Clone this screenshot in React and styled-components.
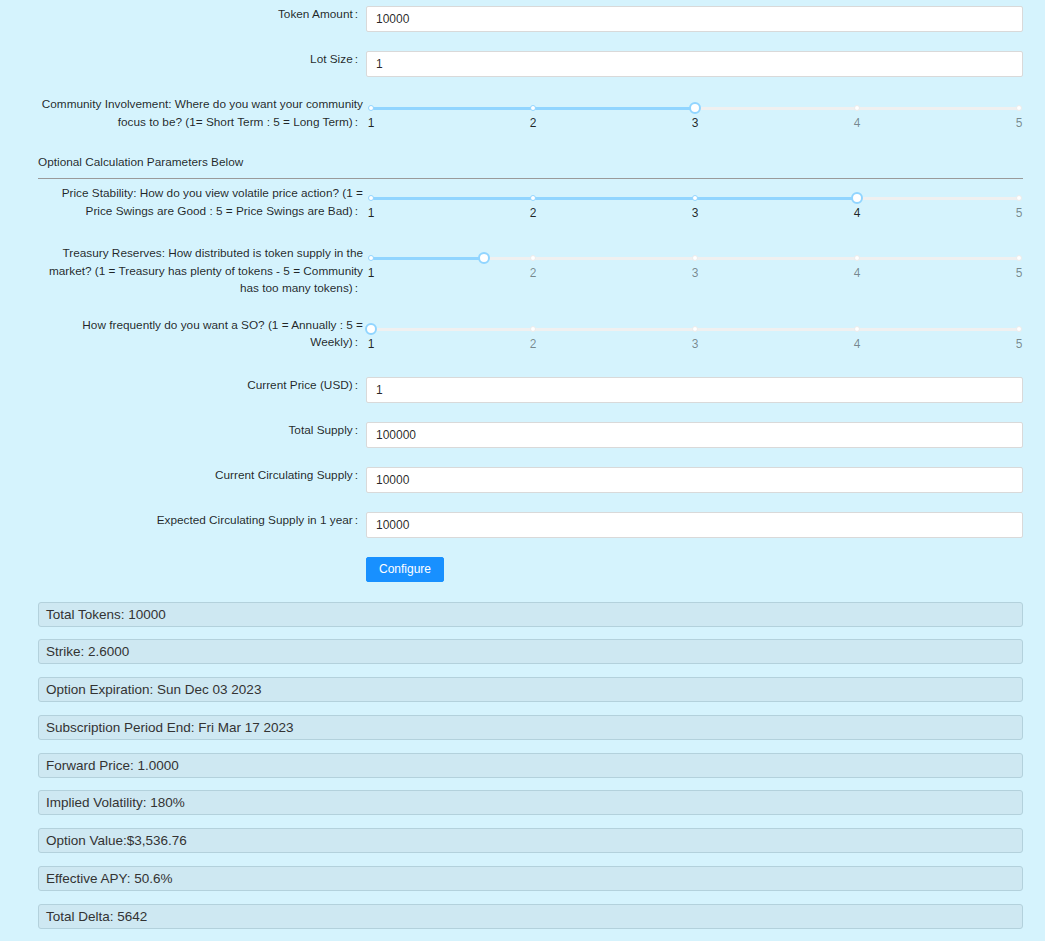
import React from "react";
import styled, { createGlobalStyle } from "styled-components";

const GlobalStyle = createGlobalStyle`
  html, body {
    margin: 0;
    padding: 0;
    background: #d5f3fd;
    font-family: "Liberation Sans", Arial, sans-serif;
    color: rgba(0, 0, 0, 0.85);
  }
  * { box-sizing: border-box; }
`;

const Page = styled.div`
  padding: 6px 22px 0 38px;
  min-height: 941px;
`;

const Form = styled.form`
  display: flex;
  flex-direction: column;
`;

const FormItem = styled.div`
  display: grid;
  grid-template-columns: 328px 1fr;
  align-items: start;
  margin-bottom: 19px;
`;

const Label = styled.label`
  display: block;
  text-align: right;
  font-size: 11.8px;
  line-height: 17.5px;
  padding: 0 3px 0 0;
  white-space: nowrap;
  color: rgba(0, 0, 0, 0.85);
`;

const Colon = styled.span`
  margin: 0 5px 0 2px;
`;

const Input = styled.input`
  display: block;
  width: 100%;
  height: 26px;
  padding: 0 9px;
  border: 1px solid #d9d9d9;
  border-radius: 2px;
  background: #fff;
  font-family: inherit;
  font-size: 12px;
  color: rgba(0, 0, 0, 0.85);
  outline: none;
`;

const SliderBox = styled.div`
  position: relative;
  height: 41px;
  margin: 0 4px 0 5px;
`;

const Rail = styled.div`
  position: absolute;
  left: 0;
  right: 0;
  top: ${(p) => p.$center - 1.5}px;
  height: 3.5px;
  border-radius: 2px;
  background: #f0f0f0;
`;

const Track = styled.div`
  position: absolute;
  left: 0;
  top: ${(p) => p.$center - 1.5}px;
  height: 3.5px;
  border-radius: 2px;
  background: #91d5ff;
`;

const Dot = styled.span`
  position: absolute;
  top: ${(p) => p.$center}px;
  width: 6px;
  height: 6px;
  border-radius: 50%;
  background: #fff;
  border: 1px solid ${(p) => (p.$active ? "#91d5ff" : "#ececec")};
  transform: translate(-50%, -50%);
`;

const Handle = styled.span`
  position: absolute;
  top: ${(p) => p.$center}px;
  width: 12px;
  height: 12px;
  border-radius: 50%;
  background: #fff;
  border: 2px solid #91d5ff;
  transform: translate(-50%, -50%);
`;

const Mark = styled.span`
  position: absolute;
  top: ${(p) => p.$center + 8}px;
  font-size: 12px;
  line-height: 14px;
  transform: translateX(-50%);
  color: ${(p) => (p.$active ? "rgba(0,0,0,0.85)" : "rgba(0,0,0,0.45)")};
`;

const Note = styled.div`
  font-size: 11.8px;
  line-height: 12px;
  color: rgba(0, 0, 0, 0.85);
`;

const Divider = styled.hr`
  margin: 10px 0 6px;
  border: none;
  border-top: 1px solid #9a9a9a;
  height: 0;
`;

const ButtonRow = styled.div`
  display: grid;
  grid-template-columns: 328px 1fr;
  margin-bottom: 20px;
`;

const Button = styled.button`
  justify-self: start;
  grid-column: 2;
  height: 25px;
  padding: 0 12px;
  border: 1px solid #1890ff;
  border-radius: 2px;
  background: #1890ff;
  color: #fff;
  font-family: inherit;
  font-size: 12px;
  cursor: pointer;
`;

const Results = styled.div`
  display: flex;
  flex-direction: column;
  gap: 12.75px;
`;

const ResultBox = styled.div`
  height: 25px;
  display: flex;
  align-items: center;
  padding: 0 7px;
  background: #cee8f2;
  border: 1px solid #b3d1dc;
  border-radius: 3px;
  font-size: 13.5px;
  color: #333;
`;

const Slider = ({ value, center = 12.5 }) => {
  const pct = ((value - 1) / 4) * 100;
  const marks = [1, 2, 3, 4, 5];
  return (
    <SliderBox>
      <Rail $center={center} />
      <Track $center={center} style={{ width: `${pct}%` }} />
      {marks.map((m) => (
        <Dot
          key={m}
          $center={center}
          $active={m <= value}
          style={{ left: `${((m - 1) / 4) * 100}%` }}
        />
      ))}
      <Handle $center={center} style={{ left: `${pct}%` }} />
      {marks.map((m) => (
        <Mark
          key={m}
          $center={center}
          $active={m <= value}
          style={{ left: `${((m - 1) / 4) * 100}%` }}
        >
          {m}
        </Mark>
      ))}
    </SliderBox>
  );
};

const FieldLabel = ({ lines }) => (
  <Label>
    {lines.map((l, i) => (
      <React.Fragment key={i}>
        {i > 0 && <br />}
        {l}
      </React.Fragment>
    ))}
    <Colon>:</Colon>
  </Label>
);

const InputField = ({ label, value }) => (
  <FormItem>
    <FieldLabel lines={[label]} />
    <Input defaultValue={value} />
  </FormItem>
);

const SliderField = ({ lines, value, center }) => (
  <FormItem>
    <FieldLabel lines={lines} />
    <Slider value={value} center={center} />
  </FormItem>
);

const results = [
  "Total Tokens: 10000",
  "Strike: 2.6000",
  "Option Expiration: Sun Dec 03 2023",
  "Subscription Period End: Fri Mar 17 2023",
  "Forward Price: 1.0000",
  "Implied Volatility: 180%",
  "Option Value:$3,536.76",
  "Effective APY: 50.6%",
  "Total Delta: 5642",
];

export default function App() {
  return (
    <>
      <GlobalStyle />
      <Page>
        <Form onSubmit={(e) => e.preventDefault()}>
          <InputField label="Token Amount" value="10000" />
          <InputField label="Lot Size" value="1" />
          <SliderField
            lines={[
              "Community Involvement: Where do you want your community",
              "focus to be? (1= Short Term : 5 = Long Term)",
            ]}
            value={3}
            center={12}
          />
          <Note>Optional Calculation Parameters Below</Note>
          <Divider />
          <SliderField
            lines={[
              "Price Stability: How do you view volatile price action? (1 =",
              "Price Swings are Good : 5 = Price Swings are Bad)",
            ]}
            value={4}
            center={13}
          />
          <SliderField
            lines={[
              "Treasury Reserves: How distributed is token supply in the",
              "market? (1 = Treasury has plenty of tokens - 5 = Community",
              "has too many tokens)",
            ]}
            value={1.7}
            center={13}
          />
          <SliderField
            lines={[
              "How frequently do you want a SO? (1 = Annually : 5 =",
              "Weekly)",
            ]}
            value={1}
            center={12.5}
          />
          <InputField label="Current Price (USD)" value="1" />
          <InputField label="Total Supply" value="100000" />
          <InputField label="Current Circulating Supply" value="10000" />
          <InputField label="Expected Circulating Supply in 1 year" value="10000" />
          <ButtonRow>
            <Button type="submit">Configure</Button>
          </ButtonRow>
        </Form>
        <Results>
          {results.map((r) => (
            <ResultBox key={r}>{r}</ResultBox>
          ))}
        </Results>
      </Page>
    </>
  );
}
